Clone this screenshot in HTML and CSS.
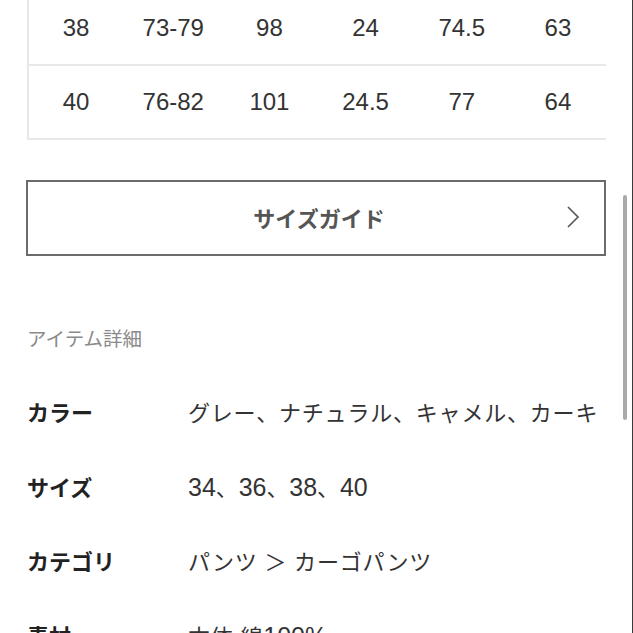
FILE: index.html
```html
<!DOCTYPE html>
<html lang="ja">
<head>
<meta charset="utf-8">
<title>サイズガイド</title>
<link rel="stylesheet" href="styles.css">
</head>
<body>
<div class="page">
  <div class="size-table">
    <div class="row">
      <span>38</span><span>73-79</span><span>98</span><span>24</span><span>74.5</span><span>63</span>
    </div>
    <div class="row">
      <span>40</span><span>76-82</span><span>101</span><span>24.5</span><span>77</span><span>64</span>
    </div>
  </div>

  <div class="guide-btn">
    <span class="guide-label">サイズガイド</span>
    <svg class="chevron" width="14" height="24" viewBox="0 0 14 24"><polyline points="2,2 12,12 2,22" fill="none" stroke="#555" stroke-width="1.6" stroke-linejoin="miter"/></svg>
  </div>

  <h2 class="section-title">アイテム詳細</h2>

  <div class="details">
    <div class="detail-row"><div class="label">カラー</div><div class="value">グレー、ナチュラル、キャメル、カーキ</div></div>
    <div class="detail-row"><div class="label">サイズ</div><div class="value"><span class="num">34</span>、<span class="num">36</span>、<span class="num">38</span>、<span class="num">40</span></div></div>
    <div class="detail-row"><div class="label">カテゴリ</div><div class="value">パンツ ＞ カーゴパンツ</div></div>
    <div class="detail-row"><div class="label">素材</div><div class="value">本体:綿<span class="num">100%</span></div></div>
  </div>
</div>
<div class="scrollbar"></div>
</body>
</html>
```

FILE: styles.css
```css
html, body {
  margin: 0;
  padding: 0;
  background: #fff;
  overflow: hidden;
}
body {
  font-family: "Liberation Sans", "Noto Sans CJK JP", sans-serif;
  color: #333;
  height: 633px;
  box-sizing: border-box;
  border-right: 1px solid #3a3a3a;
}
.page {
  padding-left: 26px;
  width: 580px;
}
.size-table {
  margin-top: -8px;
  border-left: 2px solid #e8e8e8;
  margin-left: 1px;
}
.row {
  display: grid;
  grid-template-columns: repeat(6, 1fr);
  height: 74px;
  align-items: center;
  border-bottom: 2px solid #e8e8e8;
  box-sizing: border-box;
  font-size: 24px;
  color: #333;
}
.row span {
  text-align: center;
}
.row span:first-child { margin-left: -2px; }

.guide-btn {
  margin-top: 40px;
  height: 76px;
  width: 580px;
  box-sizing: border-box;
  border: 2px solid #6b6b6b;
  display: grid;
  grid-template-columns: 1fr auto 1fr;
  align-items: center;
  padding: 0 24px 2px 30px;
}
.guide-label {
  grid-column: 2;
  font-family: "Noto Sans CJK JP", sans-serif;
  font-weight: 700;
  font-size: 22px;
  color: #555;
}
.chevron {
  grid-column: 3;
  justify-self: end;
}
.section-title {
  margin: 70px 0 0 1px;
  font-weight: 400;
  font-size: 19.5px;
  line-height: 24px;
  color: #8a8a8a;
  font-family: "Noto Sans CJK JP", sans-serif;
}
.details {
  margin-top: 24px;
}
.detail-row {
  display: flex;
  align-items: center;
  height: 74.5px;
  font-size: 22px;
}
.label {
  width: 161px;
  flex: none;
  font-weight: 700;
  color: #222;
  font-family: "Noto Sans CJK JP", sans-serif;
  padding-left: 1px;
}
.value {
  color: #333;
  letter-spacing: 0.8px;
}
.num {
  font-size: 25px;
  letter-spacing: 0;
}
.scrollbar {
  position: fixed;
  right: 6px;
  top: 195px;
  width: 4px;
  height: 225px;
  border-radius: 2px;
  background: #aaa;
}
```
